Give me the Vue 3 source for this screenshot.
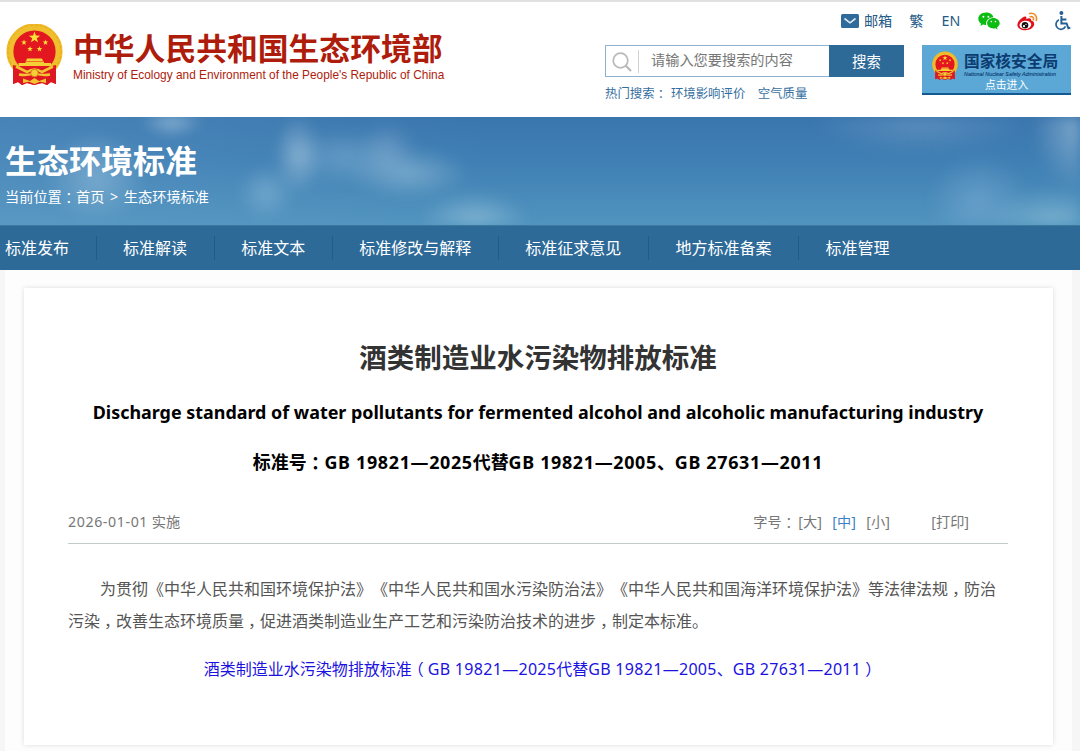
<script setup>
import { h } from 'vue'

const navItems = ['标准发布', '标准解读', '标准文本', '标准修改与解释', '标准征求意见', '地方标准备案', '标准管理']

const star = (cx, cy, r) => {
  const pts = []
  for (let i = 0; i < 10; i++) {
    const a = -Math.PI / 2 + (i * Math.PI) / 5
    const q = i % 2 ? r * 0.4 : r
    pts.push(`${(cx + q * Math.cos(a)).toFixed(2)},${(cy + q * Math.sin(a)).toFixed(2)}`)
  }
  return h('polygon', { points: pts.join(' '), fill: '#fbe03a' })
}

const Emblem = () =>
  h('svg', { viewBox: '0 0 57 62' }, [
    h('path', { d: 'M8 40 L49 40 L50 60 L45 58 L41 61 L36 59 L28 61 L21 59 L16 61 L12 58 L7 60 Z', fill: '#e01b24' }),
    h('circle', { cx: 28.5, cy: 27.5, r: 24.6, fill: '#e3171f', stroke: '#f0bd2b', 'stroke-width': 7 }),
    h('circle', { cx: 28.5, cy: 27.5, r: 26.6, fill: 'none', stroke: '#d99a1c', 'stroke-width': 0.6, 'stroke-dasharray': '3 2' }),
    h('circle', { cx: 28.5, cy: 27.5, r: 23.2, fill: 'none', stroke: '#e9c94a', 'stroke-width': 0.7, 'stroke-dasharray': '2 2' }),
    star(28.5, 13.5, 6),
    star(18, 18.5, 3),
    star(39.5, 18.5, 3),
    star(24, 25, 3),
    star(33.5, 25, 3),
    h('path', { d: 'M21 34.5 H36 L37 37 H20 Z M19.5 37.5 H38 V39 H45 V42 H12.5 V39 H19.5 Z', fill: '#f6cf35' }),
    h('path', { d: 'M7 41 Q28 48 50 41 L50 60 L45 58 L41 61 L36 59 L28 61 L21 59 L16 61 L12 58 L7 60 Z', fill: '#dd1822' }),
    h('path', { d: 'M10 42.5 L21 48 Q28.5 43 36 48 L47 42.5', fill: 'none', stroke: '#f2c431', 'stroke-width': 2.6 }),
    h('path', { d: 'M13 50.5 Q22 52 28.5 49 Q35 52 44 50.5', fill: 'none', stroke: '#f2c431', 'stroke-width': 2.4 }),
    h('path', { d: 'M17 54.5 L24 57 L28.5 54 L33 57 L40 54.5 V59 L34 57.8 L28.5 60 L23 57.8 L17 59 Z', fill: '#f2c431' }),
    h('circle', { cx: 28.5, cy: 49, r: 3.8, fill: '#f6cf35', stroke: '#dc6a1c', 'stroke-width': 0.8 }),
  ])
</script>

<template>
  <div class="page">
    <header class="header">
      <div class="brand">
        <Emblem class="emblem" />
        <div class="brand-text">
          <div class="brand-cn">中华人民共和国生态环境部</div>
          <div class="brand-en">Ministry of Ecology and Environment of the People's Republic of China</div>
        </div>
      </div>
      <div class="tools">
        <div class="links">
          <svg class="mail" viewBox="0 0 18 14"><rect width="18" height="14" rx="1.500" fill="#2e6a9a" /><path d="M3.500 4.500 L9 8.800 L14.500 4.500" fill="none" stroke="#d9e8f2" stroke-width="1.600" stroke-linejoin="round" /></svg>
          <a class="l-mail">邮箱</a>
          <a class="l-trad">繁</a>
          <a class="l-en">EN</a>
          <svg class="wechat" viewBox="0 0 22 18">
            <path d="M8 0.5C3.6 .5 .3 3.3 .3 6.8c0 2 1.1 3.7 2.8 4.9L2.4 14l2.7-1.4c1 .3 2 .4 3.1.3-.9-3.9 2.4-7.6 7.3-7.6C14.8 2.500 11.700 .5 8 .5z" fill="#0bbd12" />
            <path d="M21.700 11.300c0-2.900-2.900-5.200-6.300-5.200s-6.300 2.300-6.300 5.200 2.800 5.200 6.300 5.200c.7 0 1.400-.1 2.100-.3l2.100 1.200-.6-1.900c1.600-1 2.700-2.500 2.700-4.200z" fill="#0bbd12" />
            <g fill="#fff"><circle cx="5.400" cy="4.800" r="1" /><circle cx="10.400" cy="4.800" r="1" /><circle cx="13.300" cy="9.600" r=".8" /><circle cx="17.400" cy="9.600" r=".8" /></g>
          </svg>
          <svg class="weibo" viewBox="0 0 21 19">
            <path d="M7.800 4.500C9.300 4 9.700 5.300 9.200 7c2.800-1.200 5.300-1 4.900 1.600 2 .5 3.300 1.800 3.100 3.700-.3 3.100-4 6-8.700 6C4 18.300.4 16.200.4 13c0-3.400 4.300-7.700 7.400-8.500z" fill="#e0101b" />
            <ellipse cx="8.400" cy="12.900" rx="5.900" ry="4.100" fill="#fff" transform="rotate(-8 8.400 12.900)" />
            <circle cx="8" cy="13.200" r="3.300" fill="#151010" /><circle cx="7" cy="14.200" r="1.100" fill="#fff" /><circle cx="9" cy="12.400" r=".6" fill="#fff" />
            <path d="M12.600 1.500c4.300-1.100 8 2.200 6.700 7M13.300 4.800c2.200-.6 3.700 .9 3.100 3" fill="none" stroke="#f08a22" stroke-width="1.600" stroke-linecap="round" />
          </svg>
          <svg class="access" viewBox="0 0 17 20">
            <circle cx="7.400" cy="2.100" r="2" fill="#235f94" />
            <path d="M7.400 5V12.400H12.600L14.400 17.300L16.300 16.600M7.800 8.500H12.400" fill="none" stroke="#235f94" stroke-width="2" />
            <path d="M5 8.700A5 5 0 1 0 11.500 15.400" fill="none" stroke="#235f94" stroke-width="1.700" />
          </svg>
        </div>
        <div class="tool-row">
          <div class="search-col">
            <div class="search">
              <svg class="glass" viewBox="0 0 20 20"><circle cx="8.500" cy="8.500" r="7.300" fill="none" stroke="#b9b9b9" stroke-width="1.700" /><path d="M13.800 13.800L19 19" stroke="#b9b9b9" stroke-width="2.200" /></svg>
              <span class="placeholder">请输入您要搜索的内容</span>
              <button class="btn">搜索</button>
            </div>
            <div class="hot"><span>热门搜索<span class="mid">：</span></span><a class="hot-a">环境影响评价</a><a class="hot-b">空气质量</a></div>
          </div>
          <div class="safety">
            <Emblem class="safety-emblem" />
            <div class="safety-text">
              <div class="safety-cn">国家核安全局</div>
              <div class="safety-en">National Nuclear Safety Administration</div>
              <div class="safety-go">点击进入</div>
            </div>
          </div>
        </div>
      </div>
    </header>

    <section class="hero">
      <h1>生态环境标准</h1>
      <div class="crumb">当前位置<span class="mid">：</span>首页 <span class="gt">&gt;</span> 生态环境标准</div>
    </section>

    <nav class="nav">
      <a v-for="item in navItems" :key="item">{{ item }}</a>
    </nav>

    <main class="body">
      <article class="card">
        <h2>酒类制造业水污染物排放标准</h2>
        <p class="sub-en">Discharge standard of water pollutants for fermented alcohol and alcoholic manufacturing industry</p>
        <p class="sub-no">标准号<span class="mid">：</span><span class="code">GB 19821—2025</span>代替<span class="code">GB 19821—2005</span>、<span class="code">GB 27631—2011</span></p>
        <div class="meta">
          <span class="date"><span class="day">2026-01-01</span> 实施</span>
          <span class="size-label">字号<span class="mid">：</span></span>
          <a class="size">[大]</a><a class="size on">[中]</a><a class="size">[小]</a>
          <a class="print">[打印]</a>
        </div>
        <p class="text">为贯彻《中华人民共和国环境保护法》《中华人民共和国水污染防治法》《中华人民共和国海洋环境保护法》等法律法规<span class="mid">，</span>防治<br />污染<span class="mid">，</span>改善生态环境质量<span class="mid">，</span>促进酒类制造业生产工艺和污染防治技术的进步<span class="mid">，</span>制定本标准。</p>
        <p class="file"><a>酒类制造业水污染物排放标准<span class="mid">（</span><span class="code">GB 19821—2025</span>代替<span class="code">GB 19821—2005</span>、<span class="code">GB 27631—2011</span><span class="mid">）</span></a></p>
      </article>
    </main>
  </div>
</template>

<style>
body {
  margin: 0;
  overflow: hidden;
}
</style>

<style scoped>
* {
  box-sizing: border-box;
}
.page {
  width: 1080px;
  height: 751px;
  display: flex;
  flex-direction: column;
  overflow: hidden;
  background: #f6f6f6;
  font-family: 'Noto Sans', 'Noto Sans CJK SC', sans-serif;
  text-spacing-trim: space-all;
  white-space: nowrap;
}
h1, h2, p {
  margin: 0;
}
/* Half-width form of full-width punctuation, centred in its one-em cell */
.mid {
  font-family: 'Noto Sans CJK SC', sans-serif;
  font-feature-settings: 'halt';
  line-height: 1;
  padding: 0 .25em;
}
.header {
  height: 117px;
  flex: none;
  display: flex;
  justify-content: space-between;
  background: #fff;
  border-top: 2px solid #e1e1e1;
  padding: 0 9px 0 6px;
}
.brand {
  display: flex;
  padding-top: 22px;
  gap: 10px;
}
.emblem {
  width: 57px;
  height: 62px;
}
.brand-cn {
  margin-top: 5px;
  font-size: 30.8px;
  line-height: 38px;
  font-weight: 700;
  color: #ae1c0c;
}
.brand-en {
  margin-top: 1px;
  font: 11.88px/14px 'Liberation Sans', sans-serif;
  color: #ae1c0c;
}
.tools {
  width: 466px;
}
.links {
  height: 43px;
  padding: 7px 0 12px;
  display: flex;
  align-items: center;
  justify-content: flex-end;
  font-size: 14.2px;
  line-height: 24px;
  color: #245a86;
}
.mail {
  width: 18px;
  height: 14px;
  margin-right: 5px;
}
.l-mail {
  margin-right: 17px;
}
.l-trad {
  margin-right: 18px;
}
.l-en {
  width: 19px;
  margin-right: 17.5px;
}
.wechat {
  width: 22px;
  height: 18px;
  margin-right: 17px;
}
.weibo {
  width: 21px;
  height: 19px;
  margin-right: 16px;
}
.access {
  width: 17px;
  height: 20px;
}
.tool-row {
  display: flex;
  justify-content: space-between;
}
.search-col {
  width: 299px;
}
.search {
  height: 32px;
  display: flex;
  align-items: center;
  border: 1px solid #8fb0ce;
  border-right: 0;
}
.glass {
  width: 20px;
  height: 20px;
  margin: 2px 6px 0 6px;
}
.placeholder {
  height: 23px;
  flex: 1;
  border-left: 1px solid #cfd4d8;
  padding-left: 12px;
  font-size: 14.2px;
  line-height: 20px;
  color: #777;
}
.btn {
  width: 75px;
  height: 32px;
  flex: none;
  border: 0;
  padding: 0;
  background: #2e6a98;
  color: #fff;
  font: 14.4px/32px 'Noto Sans CJK SC', sans-serif;
}
.hot {
  display: flex;
  margin-top: 7px;
  font-size: 12.4px;
  line-height: 20px;
  color: #356f9f;
}
.hot-a {
  margin-left: 4px;
}
.hot-b {
  margin-left: 12.5px;
}
.safety {
  width: 149px;
  height: 50px;
  display: flex;
  background: #5ba7d6;
  border-bottom: 2px solid #135a92;
  padding: 6px 0 0 10px;
  color: #0b3b6f;
}
.safety-emblem {
  width: 26px;
  height: 30px;
  margin-right: 6px;
}
.safety-text {
  width: 96px;
}
.safety-cn {
  font-size: 15.7px;
  line-height: 20px;
  font-weight: 700;
}
.safety-en {
  font: italic 5.4px/6px 'Liberation Sans', sans-serif;
  -webkit-text-stroke: 0.1px #0b3b6f;
}
.safety-go {
  margin-left: 21px;
  font-size: 10.8px;
  line-height: 16px;
  color: #fff;
}
.hero {
  position: relative;
  isolation: isolate;
  overflow: hidden;
  height: 108px;
  flex: none;
  padding: 23px 5px 0;
  color: #fff;
  background:
    linear-gradient(90deg, rgba(110, 165, 205, .28), transparent 45%),
    linear-gradient(#3a76ae, #3f7fb4 40%, #5194bf);
}
.hero::before {
  content: '';
  position: absolute;
  inset: 0;
  z-index: -1;
  filter: blur(6px);
  background:
    radial-gradient(ellipse 32px 20px at 172px 0, rgba(190, 215, 235, .7), transparent),
    radial-gradient(ellipse 52px 46px at 96px 60px, rgba(170, 205, 228, .45), transparent),
    radial-gradient(ellipse 24px 40px at 298px 38px, rgba(170, 200, 222, .62), transparent),
    radial-gradient(ellipse 29px 28px at 266px 76px, rgba(160, 200, 225, .42), transparent),
    radial-gradient(ellipse 60px 28px at 345px 40px, rgba(160, 200, 225, .36), transparent),
    radial-gradient(ellipse 62px 26px at 408px 56px, rgba(170, 205, 225, .48), transparent),
    radial-gradient(ellipse 30px 28px at 388px 32px, rgba(160, 190, 220, .36), transparent),
    radial-gradient(ellipse 55px 30px at 475px 104px, rgba(165, 205, 225, .55), transparent),
    radial-gradient(ellipse 50px 48px at 978px 84px, rgba(150, 190, 225, .36), transparent),
    radial-gradient(ellipse 66px 34px at 1052px 104px, rgba(155, 200, 220, .52), transparent),
    radial-gradient(ellipse 48px 64px at 1080px 10px, rgba(180, 205, 225, .55), transparent),
    radial-gradient(ellipse 110px 32px at 920px 6px, rgba(140, 175, 210, .38), transparent);
}
.hero h1 {
  font-size: 32px;
  line-height: 42px;
  font-weight: 700;
}
.crumb {
  margin-top: 4px;
  font-size: 14.2px;
  line-height: 21px;
}
.gt {
  margin: 0 2px;
}
.nav {
  height: 45px;
  flex: none;
  display: flex;
  align-items: center;
  background: #2e6a98;
  border-top: 1px solid #3f789f;
}
.nav a {
  height: 24px;
  padding: 0 27px 0 26px;
  border-right: 1px solid #235a86;
  font-size: 16.03px;
  line-height: 24px;
  color: #fff;
}
.nav a:first-child {
  padding-left: 5px;
}
.nav a:last-child {
  border-right: 0;
}
.body {
  width: 1067px;
  flex: 1;
  margin-left: 5px;
  padding: 18px 19px 6px;
  background: #fdfdfd;
}
.card {
  height: 457px;
  background: #fff;
  box-shadow: 0 0 5px rgba(0, 0, 0, .13);
  padding: 50px 45px 0 44px;
}
.card h2 {
  font-size: 27.5px;
  line-height: 40px;
  font-weight: 700;
  color: #333;
  text-align: center;
}
.sub-en, .sub-no {
  text-align: center;
  font-size: 17.92px;
  line-height: 26px;
  font-weight: 700;
  color: #000;
}
.sub-en {
  margin-top: 21px;
}
.sub-no {
  margin-top: 24px;
}
.sub-no .code {
  letter-spacing: .67px;
}
.meta {
  display: flex;
  margin-top: 36px;
  height: 33px;
  padding-right: 39px;
  border-bottom: 1px solid #c3cccd;
  font-size: 14.2px;
  line-height: 21px;
  color: #777;
}
.date {
  flex: 1;
}
.day {
  letter-spacing: .6px;
}
.size {
  width: 24px;
  margin-right: 10px;
}
.size-label {
  width: 45px;
}
.on {
  color: #3d7fc4;
}
.print {
  margin-left: 31px;
}
.text {
  margin-top: 29px;
  font-size: 16px;
  line-height: 32px;
  text-indent: 32px;
  color: #555;
}
.file {
  margin-top: 16px;
  padding-left: 5px;
  font-size: 16px;
  line-height: 32px;
  text-align: center;
  color: #1b12e0;
}
.file .code {
  letter-spacing: .3px;
}
</style>
